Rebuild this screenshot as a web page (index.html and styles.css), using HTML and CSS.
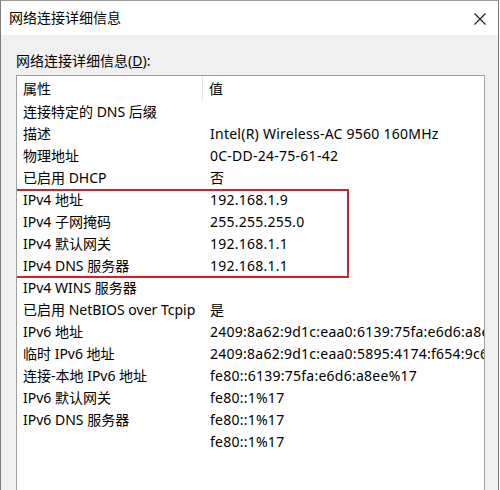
FILE: index.html
```html
<!DOCTYPE html>
<html lang="zh-CN">
<head>
    <meta charset="UTF-8">
    <meta name="viewport" content="width=device-width, initial-scale=1.0">
    <title>网络连接详细信息</title>
    <link rel="stylesheet" href="styles.css">
</head>
<body>
    <div class="dialog">
        <div class="titlebar">
            <span class="title">网络连接详细信息</span>
            <svg class="close" width="12" height="12" viewBox="0 0 12 12">
                <path d="M0.5 0.5 L11.5 11.5 M11.5 0.5 L0.5 11.5" stroke="#1a1a1a" stroke-width="1.1" fill="none"/>
            </svg>
        </div>

        <div class="content">
            <div class="group-label">网络连接详细信息(<u>D</u>):</div>

            <div class="listview">
                <div class="list-head">
                    <div class="col-name">属性</div>
                    <div class="col-value">值</div>
                </div>

                <div class="row"><div class="col-name">连接特定的 DNS 后缀</div><div class="col-value"></div></div>
                <div class="row"><div class="col-name">描述</div><div class="col-value">Intel(R) Wireless-AC 9560 160MHz</div></div>
                <div class="row"><div class="col-name">物理地址</div><div class="col-value">0C-DD-24-75-61-42</div></div>
                <div class="row"><div class="col-name">已启用 DHCP</div><div class="col-value">否</div></div>
                <div class="row"><div class="col-name">IPv4 地址</div><div class="col-value">192.168.1.9</div></div>
                <div class="row"><div class="col-name">IPv4 子网掩码</div><div class="col-value">255.255.255.0</div></div>
                <div class="row"><div class="col-name">IPv4 默认网关</div><div class="col-value">192.168.1.1</div></div>
                <div class="row"><div class="col-name">IPv4 DNS 服务器</div><div class="col-value">192.168.1.1</div></div>
                <div class="row"><div class="col-name">IPv4 WINS 服务器</div><div class="col-value"></div></div>
                <div class="row"><div class="col-name">已启用 NetBIOS over Tcpip</div><div class="col-value">是</div></div>
                <div class="row"><div class="col-name">IPv6 地址</div><div class="col-value">2409:8a62:9d1c:eaa0:6139:75fa:e6d6:a8ee</div></div>
                <div class="row"><div class="col-name">临时 IPv6 地址</div><div class="col-value">2409:8a62:9d1c:eaa0:5895:4174:f654:9c6a</div></div>
                <div class="row"><div class="col-name">连接-本地 IPv6 地址</div><div class="col-value">fe80::6139:75fa:e6d6:a8ee%17</div></div>
                <div class="row"><div class="col-name">IPv6 默认网关</div><div class="col-value">fe80::1%17</div></div>
                <div class="row"><div class="col-name">IPv6 DNS 服务器</div><div class="col-value">fe80::1%17</div></div>
                <div class="row"><div class="col-name"></div><div class="col-value">fe80::1%17</div></div>

                <!-- encadré rouge autour des lignes IPv4 -->
                <div class="highlight"></div>
            </div>
        </div>
    </div>
</body>
</html>
```

FILE: styles.css
```css
* {
    margin: 0;
    padding: 0;
    box-sizing: border-box;
}

body {
    font-family: "Noto Sans", "Noto Sans CJK SC", sans-serif;
    font-size: 14px;
    color: #000;
    background: #fafafa;
    width: 500px;
    height: 490px;
    overflow: hidden;
}

.dialog {
    width: 499px;
    height: 490px;
    border-left: 1px solid #7a7a7a;
    border-right: 1px solid #7a7a7a;
    border-top: 1px solid #9a9a9a;
    display: flex;
    flex-direction: column;
    background: #f0f0f0;
}

.titlebar {
    height: 34px;
    background: white;
    display: flex;
    align-items: center;
    justify-content: space-between;
    padding: 0 12px 0 8px;
    flex-shrink: 0;
}

.title {
    font-size: 14px;
    line-height: 20px;
}

.close {
    display: block;
    margin-top: 1px;
}

.content {
    flex: 1;
    padding: 16px 13px 0 15px;
    display: flex;
    flex-direction: column;
    min-height: 0;
}

.group-label {
    line-height: 20px;
    margin-bottom: 4px;
}

.listview {
    position: relative;
    flex: 1;
    background: white;
    border: 1px solid #a0a0a0;
    border-bottom: none;
    overflow: hidden;
}

.list-head,
.row {
    display: grid;
    grid-template-columns: 186px 1fr;
    white-space: nowrap;
}

.list-head {
    height: 25px;
    line-height: 25px;
}

.list-head .col-name {
    border-right: 1px solid #e5e5e5;
}

.row {
    height: 22px;
    line-height: 22px;
}

.col-name {
    padding-left: 6px;
    overflow: hidden;
}

.col-value {
    padding-left: 6px;
    overflow: hidden;
}

.row .col-value {
    padding-left: 7px;
    letter-spacing: 0.25px;
}

.highlight {
    position: absolute;
    left: -6px;
    top: 113px;
    width: 338px;
    height: 89px;
    border: 2.5px solid #d3202f;
}
```
